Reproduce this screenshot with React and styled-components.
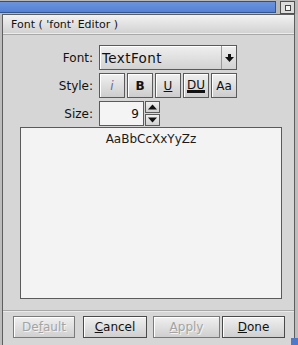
import React from 'react';
import styled, { createGlobalStyle } from 'styled-components';

const GlobalStyle = createGlobalStyle`
  html, body {
    margin: 0;
    padding: 0;
    background: #c4c4c4;
  }
  body {
    font-family: "DejaVu Sans", Verdana, sans-serif;
    color: #111;
  }
`;

const Screen = styled.div`
  width: 298px;
  height: 345px;
  display: flex;
  flex-direction: column;
  background: #bdbdbd;
  overflow: hidden;
  position: relative;
`;

const TopStrip = styled.div`
  height: 14px;
  display: flex;
  align-items: stretch;
  background: #b8b8b8;
`;

const BlueBar = styled.div`
  flex: 1;
  margin: 1px 4px 1px 0;
  background: linear-gradient(#6b93df, #5580d2);
  border-top: 1px solid #2f4f8a;
  border-bottom: 1px solid #34548e;
  border-right: 1px solid #34548e;
`;

const CloseBox = styled.div`
  width: 13px;
  height: 11px;
  margin: 1px 3px 0 0;
  border: 1px solid #505050;
  background: #dcdcdc;
  display: flex;
  align-items: center;
  justify-content: center;

  span {
    width: 4px;
    height: 4px;
    border: 1px solid #444;
    background: #f4f4f4;
  }
`;

const Window = styled.div`
  flex: 1;
  margin: 0 3px 4px 2px;
  border: 1px solid #5e5e5e;
  background: #d6d6d6;
  display: flex;
  flex-direction: column;
`;

const Header = styled.div`
  height: 19px;
  padding-left: 8px;
  display: flex;
  align-items: center;
  font-size: 11px;
  background: linear-gradient(#f2f2f2, #d0d0d0);
  border-bottom: 1px solid #a8a8a8;
  box-shadow: inset 0 -1px 0 #ececec;
`;

const Body = styled.div`
  flex: 1;
  display: flex;
  flex-direction: column;
  padding: 10px 12px 0 14px;
`;

const Form = styled.div`
  display: grid;
  grid-template-columns: 76px auto;
  column-gap: 6px;
  row-gap: 3px;
  align-items: center;
`;

const Label = styled.div`
  text-align: right;
  font-size: 12px;
`;

const Select = styled.div`
  width: 136px;
  height: 23px;
  display: flex;
  border: 1px solid #5a5a5a;
  background: linear-gradient(#efefef, #d2d2d2);
  box-shadow: inset 1px 1px 0 #fff;
`;

const SelectText = styled.div`
  flex: 1;
  padding-left: 2px;
  font-size: 13.5px;
  letter-spacing: 0.4px;
  display: flex;
  align-items: center;
  border-right: 1px solid #9a9a9a;
`;

const SelectArrow = styled.div`
  width: 14px;
  display: flex;
  align-items: center;
  justify-content: center;
`;

const StyleButtons = styled.div`
  display: flex;
  gap: 2px;
`;

const Toggle = styled.div`
  width: 24px;
  height: 23px;
  border: 1px solid #5a5a5a;
  background: linear-gradient(#f0f0f0, #cdcdcd);
  box-shadow: inset 1px 1px 0 #fff;
  display: flex;
  align-items: center;
  justify-content: center;
  font-size: 12px;
  font-weight: ${(p) => (p.$bold ? 'bold' : 'normal')};
  font-style: ${(p) => (p.$italic ? 'italic' : 'normal')};
  text-decoration: ${(p) => (p.$underline ? 'underline' : 'none')};
  color: ${(p) => (p.$italic ? '#6a6aa0' : '#111')};
`;

const DoubleU = styled.span`
  text-decoration: underline;
  border-bottom: 2px solid #111;
  line-height: 12px;
`;

const SizeField = styled.div`
  display: flex;
  align-items: center;
  gap: 1px;
`;

const SizeInput = styled.div`
  width: 39px;
  height: 23px;
  border: 1px solid #5a5a5a;
  background: #f4f4f4;
  font-size: 12px;
  display: flex;
  align-items: center;
  justify-content: flex-end;
  padding-right: 4px;
`;

const Spinner = styled.div`
  width: 15px;
  height: 25px;
  display: flex;
  flex-direction: column;
  gap: 1px;
`;

const SpinButton = styled.div`
  flex: 1;
  border: 1px solid #5a5a5a;
  background: linear-gradient(#f0f0f0, #d0d0d0);
  display: flex;
  align-items: center;
  justify-content: center;
`;

const Preview = styled.div`
  margin: 1px 0 0 3px;
  height: 166px;
  border: 1px solid #5a5a5a;
  background: #f3f3f3;
  text-align: center;
  font-size: 12px;
  padding-top: 4px;
  color: #1a1a1a;
`;

const Footer = styled.div`
  margin: 11px -12px 0 -14px;
  border-top: 1px solid #a8a8a8;
  box-shadow: inset 0 1px 0 #eaeaea;
  padding: 5px 0 0 10px;
  height: 32px;
  display: flex;
`;

const Button = styled.div`
  box-sizing: border-box;
  height: 22px;
  width: ${(p) => p.$w}px;
  flex-shrink: 0;
  margin-left: ${(p) => p.$ml || 0}px;
  border: 1px solid ${(p) => (p.$disabled ? '#7a7a7a' : '#4a4a4a')};
  background: linear-gradient(#f0f0f0, #cfcfcf);
  box-shadow: inset 1px 1px 0 #fff;
  display: flex;
  align-items: center;
  justify-content: center;
  font-size: 12px;
  color: ${(p) => (p.$disabled ? '#a4a4a4' : '#111')};
  text-shadow: ${(p) => (p.$disabled ? '1px 1px 0 #f4f4f4' : 'none')};

  u {
    text-decoration: underline;
  }
`;

const Grip = styled.div`
  position: absolute;
  right: 0;
  bottom: 0;
  width: 7px;
  height: 7px;
  background: #4f78c8;
`;

const Arrow = ({ up }) => (
  <svg width="9" height="6" viewBox="0 0 9 6">
    {up ? <path d="M0 5.5 L4.5 0.5 L9 5.5 Z" fill="#111" /> : <path d="M0 0.5 L9 0.5 L4.5 5.5 Z" fill="#111" />}
  </svg>
);

const DropArrow = () => (
  <svg width="9" height="8" viewBox="0 0 9 8">
    <rect x="3" y="0" width="3" height="3" fill="#111" />
    <path d="M0 3 L9 3 L4.5 8 Z" fill="#111" />
  </svg>
);

const App = () => {
  return (
    <Screen>
      <GlobalStyle />
      <TopStrip>
        <BlueBar />
        <CloseBox>
          <span />
        </CloseBox>
      </TopStrip>
      <Window>
        <Header>Font ( 'font' Editor )</Header>
        <Body>
          <Form>
            <Label>Font:</Label>
            <Select>
              <SelectText>TextFont</SelectText>
              <SelectArrow>
                <DropArrow />
              </SelectArrow>
            </Select>
            <Label>Style:</Label>
            <StyleButtons>
              <Toggle $italic>i</Toggle>
              <Toggle $bold>B</Toggle>
              <Toggle $underline>U</Toggle>
              <Toggle>
                <DoubleU>DU</DoubleU>
              </Toggle>
              <Toggle>Aa</Toggle>
            </StyleButtons>
            <Label>Size:</Label>
            <SizeField>
              <SizeInput>9</SizeInput>
              <Spinner>
                <SpinButton>
                  <Arrow up />
                </SpinButton>
                <SpinButton>
                  <Arrow />
                </SpinButton>
              </Spinner>
            </SizeField>
          </Form>
          <Preview>AaBbCcXxYyZz</Preview>
          <Footer>
            <Button $w={62} $disabled>
              De<u>f</u>ault
            </Button>
            <Button $w={64} $ml={8}>
              <u>C</u>ancel
            </Button>
            <Button $w={67} $ml={6} $disabled>
              <u>A</u>pply
            </Button>
            <Button $w={63} $ml={2}>
              <u>D</u>one
            </Button>
          </Footer>
        </Body>
      </Window>
      <Grip />
    </Screen>
  );
};

export default App;
